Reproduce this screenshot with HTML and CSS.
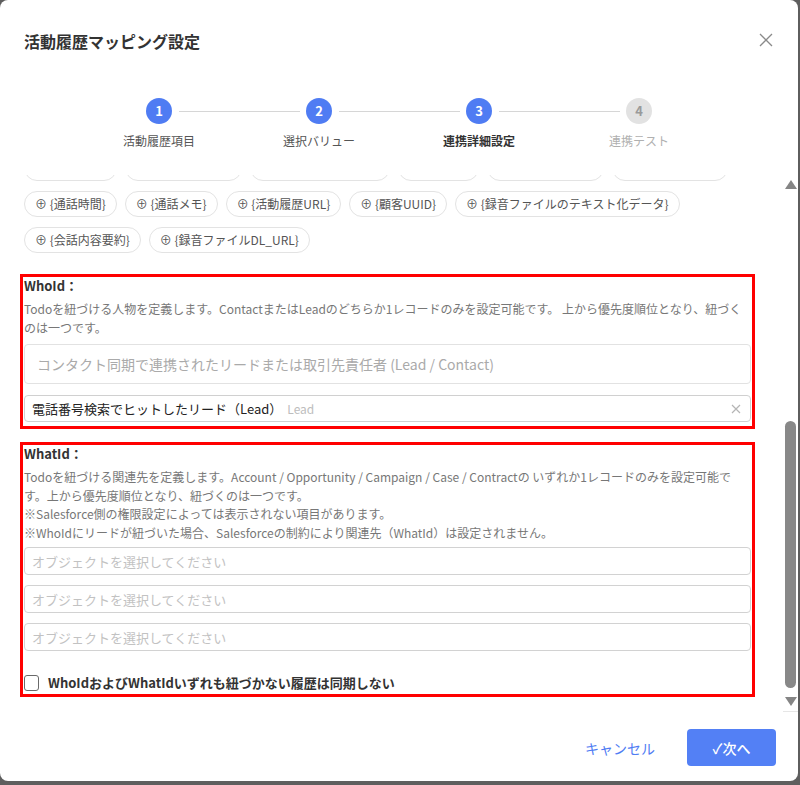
FILE: index.html
```html
<!doctype html>
<html lang="ja">
  <head>
    <meta charset="UTF-8" />
    <meta name="viewport" content="width=device-width, initial-scale=1.0" />
    <title>活動履歴マッピング設定</title>
    <link rel="stylesheet" href="styles.css">
  </head>
  <body>
    <div class="dialog">
      <!-- Header -->
      <header class="dialog-header">
        <h1 class="dialog-title">活動履歴マッピング設定</h1>
        <button class="close-button" aria-label="閉じる">
          <svg width="14" height="14" viewBox="0 0 14 14">
            <path d="M1 1 L13 13 M13 1 L1 13" stroke="#8a8a8a" stroke-width="1.3" fill="none" />
          </svg>
        </button>
      </header>

      <!-- Steps -->
      <ol class="stepper">
        <li class="step done"><span class="step-circle">1</span><span class="step-label">活動履歴項目</span></li>
        <li class="step done"><span class="step-circle">2</span><span class="step-label">選択バリュー</span></li>
        <li class="step active"><span class="step-circle">3</span><span class="step-label">連携詳細設定</span></li>
        <li class="step"><span class="step-circle">4</span><span class="step-label">連携テスト</span></li>
      </ol>

      <div class="dialog-body">
        <div class="body-scroll">
          <div class="chip-list">
            <span class="chip">⊕ {発信日時}</span>
            <span class="chip">⊕ {通話開始日時}</span>
            <span class="chip">⊕ {ユーザー電話番号}</span>
            <span class="chip">⊕ {発着信}</span>
            <span class="chip">⊕ {ユーザー氏名}</span>
            <span class="chip">⊕ {通話終了日時}</span>
            <span class="chip">⊕ {通話時間}</span>
            <span class="chip">⊕ {通話メモ}</span>
            <span class="chip">⊕ {活動履歴URL}</span>
            <span class="chip">⊕ {顧客UUID}</span>
            <span class="chip">⊕ {録音ファイルのテキスト化データ}</span>
            <span class="chip">⊕ {会話内容要約}</span>
            <span class="chip">⊕ {録音ファイルDL_URL}</span>
          </div>

          <!-- WhoId -->
          <section class="mapping-section highlight">
            <h3 class="section-title">WhoId：</h3>
            <p class="section-desc">Todoを紐づける人物を定義します。ContactまたはLeadのどちらか1レコードのみを設定可能です。 上から優先度順位となり、紐づくのは一つです。</p>
            <div class="field-readonly">コンタクト同期で連携されたリードまたは取引先責任者 (Lead / Contact)</div>
            <div class="field-value">
              <span>電話番号検索でヒットしたリード（Lead）</span>
              <span class="field-tag">Lead</span>
              <svg class="field-clear" width="10" height="10" viewBox="0 0 10 10">
                <path d="M1 1 L9 9 M9 1 L1 9" stroke="#b5b5b5" stroke-width="1.2" fill="none" />
              </svg>
            </div>
          </section>

          <!-- WhatId -->
          <section class="mapping-section highlight what-section">
            <h3 class="section-title">WhatId：</h3>
            <p class="section-desc">Todoを紐づける関連先を定義します。Account / Opportunity / Campaign / Case / Contractの いずれか1レコードのみを設定可能です。上から優先度順位となり、紐づくのは一つです。<br>※Salesforce側の権限設定によっては表示されない項目があります。<br>※WhoIdにリードが紐づいた場合、Salesforceの制約により関連先（WhatId）は設定されません。</p>
            <div class="select-list">
              <div class="select-field">オブジェクトを選択してください</div>
              <div class="select-field">オブジェクトを選択してください</div>
              <div class="select-field">オブジェクトを選択してください</div>
            </div>
            <label class="sync-option">
              <span class="checkbox"></span>
              WhoIdおよびWhatIdいずれも紐づかない履歴は同期しない
            </label>
          </section>
        </div>

        <!-- Scrollbar -->
        <div class="scrollbar">
          <span class="scroll-arrow up"></span>
          <div class="scroll-track"><div class="scroll-thumb"></div></div>
          <span class="scroll-arrow down"></span>
        </div>
      </div>

      <footer class="dialog-footer">
        <button class="btn-cancel">キャンセル</button>
        <button class="btn-next">✓次へ</button>
      </footer>
    </div>
  </body>
</html>
```

FILE: styles.css
```css
body {
  margin: 0;
  background: #5e5e5e;
  font-family: "Noto Sans CJK JP", "Noto Sans", sans-serif;
  color: #333;
}

.dialog {
  width: 798px;
  height: 781px;
  background: #ffffff;
  border-radius: 8px;
  display: flex;
  flex-direction: column;
  overflow: hidden;
}

/* Header */
.dialog-header {
  display: flex;
  align-items: center;
  justify-content: space-between;
  padding: 31px 25px 0 24px;
}

.dialog-title {
  margin: 0;
  font-size: 16px;
  line-height: 20px;
  font-weight: 700;
  color: #333;
}

.close-button {
  border: none;
  background: none;
  padding: 0;
  width: 14px;
  height: 14px;
  display: flex;
  margin-top: -2px;
}

/* Stepper */
.stepper {
  list-style: none;
  display: flex;
  width: 640px;
  margin: 47px auto 0;
  padding: 0;
}

.step {
  flex: 1;
  position: relative;
  display: flex;
  flex-direction: column;
  align-items: center;
}

.step:not(:last-child)::after {
  content: '';
  position: absolute;
  top: 13px;
  left: calc(50% + 20px);
  right: calc(-50% + 19px);
  height: 1px;
  background: #d6d6d6;
}

.step-circle {
  width: 26px;
  height: 26px;
  border-radius: 50%;
  background: #e2e2e2;
  color: #9a9a9a;
  font-size: 13px;
  font-weight: 700;
  line-height: 26px;
  text-align: center;
}

.step-label {
  margin-top: 8px;
  font-size: 12px;
  line-height: 17px;
  color: #b0b0b0;
}

.step.done .step-circle,
.step.active .step-circle {
  background: #4f7cf3;
  color: #fff;
}

.step.done .step-label {
  color: #555;
}

.step.active .step-label {
  color: #333;
  font-weight: 700;
}

/* Body (scrolled part way down) */
.dialog-body {
  flex: 1;
  display: flex;
  margin-top: 26px;
  min-height: 0;
}

.body-scroll {
  flex: 1;
  overflow: hidden;
  padding: 0 32px 0 24px;
}

.chip-list {
  display: flex;
  flex-wrap: wrap;
  gap: 10px 8px;
  margin-top: -20px;
}

.chip {
  height: 26px;
  box-sizing: border-box;
  border: 1px solid #e3e3e3;
  border-radius: 13px;
  padding: 0 10px;
  font-size: 12px;
  line-height: 24px;
  color: #555;
  white-space: nowrap;
}

.mapping-section {
  margin-top: 25px;
  padding-bottom: 3px;
}

.mapping-section.highlight {
  outline: 3px solid #ff0000;
  outline-offset: 1px;
}

.what-section {
  margin-top: 21px;
  padding-bottom: 2px;
}

.section-title {
  margin: 0;
  font-size: 13px;
  line-height: 16px;
  font-weight: 700;
  color: #333;
}

.section-desc {
  margin: 6px 0 0;
  font-size: 12px;
  line-height: 18.5px;
  color: #777;
}

.field-readonly {
  margin-top: 7px;
  height: 40px;
  box-sizing: border-box;
  border: 1px solid #e2e2e2;
  border-radius: 4px;
  padding: 0 12px;
  display: flex;
  align-items: center;
  font-size: 14px;
  color: #aaa;
}

.field-value {
  margin-top: 11px;
  height: 27px;
  box-sizing: border-box;
  border: 1px solid #d0d0d0;
  border-radius: 4px;
  padding: 0 9px 0 7px;
  display: flex;
  align-items: center;
  font-size: 13px;
  color: #222;
}

.field-tag {
  margin-left: 5px;
  font-size: 12px;
  color: #bdbdbd;
}

.field-clear {
  margin-left: auto;
}

.select-list {
  display: flex;
  flex-direction: column;
  gap: 10px;
  margin-top: 5px;
}

.select-field {
  height: 28px;
  box-sizing: border-box;
  border: 1px solid #d2d2d2;
  border-radius: 4px;
  padding: 0 7px;
  display: flex;
  align-items: center;
  font-size: 13px;
  color: #c2c2c2;
}

.sync-option {
  margin-top: 24px;
  display: flex;
  align-items: center;
  gap: 9px;
  font-size: 13px;
  line-height: 16px;
  font-weight: 700;
  color: #333;
}

.checkbox {
  width: 15px;
  height: 16px;
  box-sizing: border-box;
  border: 1px solid #6a6a6a;
  border-radius: 3px;
}

/* Scrollbar */
.scrollbar {
  width: 15px;
  display: flex;
  flex-direction: column;
  align-items: center;
  padding-top: 2px;
  border-bottom: 1px solid #e6e6e6;
}

.scroll-arrow {
  width: 0;
  height: 0;
  border-left: 6px solid transparent;
  border-right: 6px solid transparent;
}

.scroll-arrow.up {
  border-bottom: 9px solid #858585;
  margin: 3px 0;
}

.scroll-arrow.down {
  border-top: 9px solid #858585;
  margin: 0 0 5px;
}

.scroll-track {
  flex: 1;
  width: 11px;
}

.scroll-thumb {
  margin-top: 229px;
  height: 267px;
  border-radius: 6px;
  background: #888;
}

/* Footer */
.dialog-footer {
  height: 69px;
  box-sizing: border-box;
  display: flex;
  justify-content: flex-end;
  align-items: flex-start;
  padding: 17px 22px 0 0;
}

button {
  font-family: inherit;
  cursor: pointer;
}

.btn-cancel {
  height: 37px;
  padding: 0;
  margin-right: 32px;
  border: none;
  background: none;
  font-size: 14px;
  color: #4f7cf3;
}

.btn-next {
  width: 89px;
  height: 37px;
  border: none;
  border-radius: 4px;
  background: #5380f5;
  color: #fff;
  font-size: 14px;
  font-weight: 500;
}
```
